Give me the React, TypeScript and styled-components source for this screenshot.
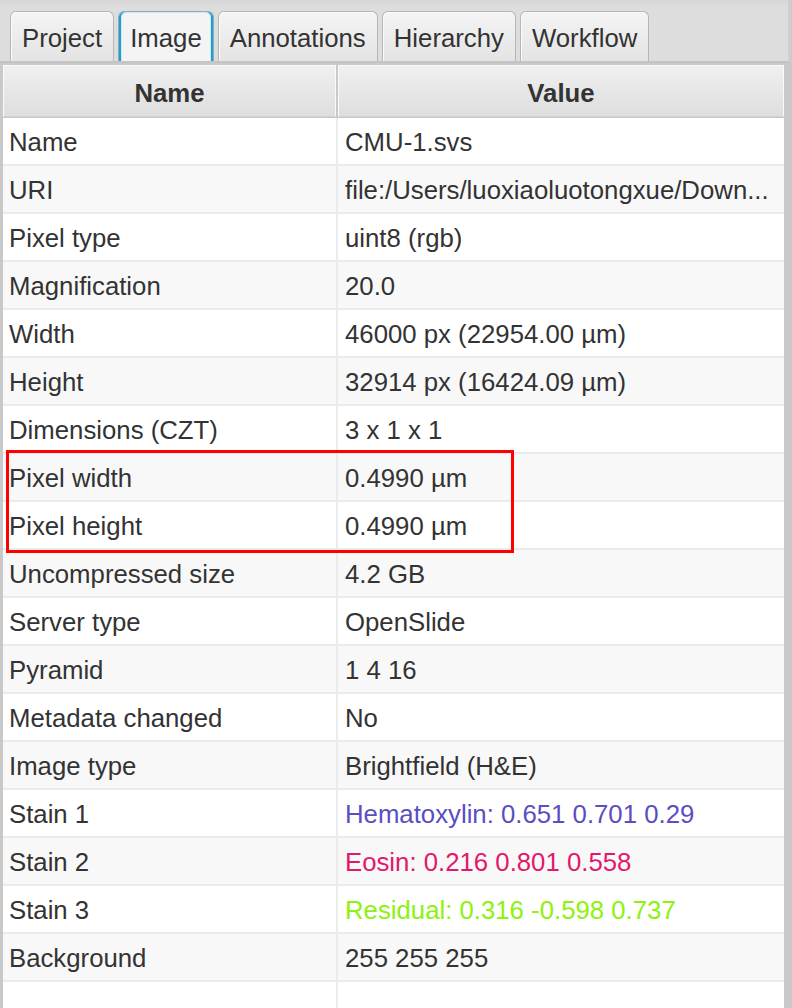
import React from "react";
import styled, { createGlobalStyle } from "styled-components";

const Global = createGlobalStyle`
  html, body { margin: 0; padding: 0; background: #c9c9c9; }
  body { font-family: "Liberation Sans", Arial, sans-serif; }
  * { box-sizing: border-box; }
`;

const Page = styled.div`
  width: 792px;
  height: 1008px;
  overflow: hidden;
  background: #c9c9c9;
  display: flex;
  flex-direction: column;
`;

const TabBar = styled.div`
  height: 63px;
  flex: none;
  display: flex;
  align-items: flex-end;
  gap: 4px;
  padding-left: 10px;
  background: linear-gradient(#d6d6d6 0px, #dddddd 6px, #dddddd 100%);
  border-bottom: 2px solid #c4c4c4;
  border-right: 3px solid #cfcfcf;
  margin-right: 1px;
`;

const Tab = styled.div<{ $active?: boolean }>`
  height: 50px;
  padding: 4px 11px 0;
  display: flex;
  align-items: center;
  font-size: 25.75px;
  color: #333;
  border-radius: 6px 6px 0 0;
  border: 1px solid ${(p) => (p.$active ? "#9aa9b0" : "#b6b6b6")};
  border-bottom: none;
  background: ${(p) =>
    p.$active ? "#f4f4f4" : "linear-gradient(#f4f4f4, #e4e4e4)"};
  box-shadow: ${(p) =>
    p.$active
      ? "inset 2px 0 0 #1d9fd6, inset -2px 0 0 #1d9fd6, inset 3px 1px 0 #c8ecf6, inset -3px 1px 0 #c8ecf6"
      : "inset 1px 1px 0 #fafafa"};
`;

const Content = styled.div`
  flex: 1;
  padding: 2px 8px 0 3px;
  display: flex;
  flex-direction: column;
`;

const Header = styled.div`
  display: grid;
  grid-template-columns: 333px 1fr;
  gap: 2px;
  height: 53px;
  flex: none;
  padding-bottom: 1px;
  background: #c9c9c9;
`;

const HeaderCell = styled.div`
  display: flex;
  align-items: center;
  justify-content: center;
  padding-top: 5px;
  font-size: 25.75px;
  font-weight: bold;
  color: #333;
  background: linear-gradient(#f0f0f0, #dedede);
  border: 1px solid #fafafa;
  border-bottom-color: #d2d2d2;
`;

const Body = styled.div`
  position: relative;
  flex: 1;
  background: #fff;
  overflow: hidden;
`;

const Row = styled.div<{ $odd: boolean }>`
  display: grid;
  grid-template-columns: 333px 2px 1fr;
  height: 48px;
  background: ${(p) => (p.$odd ? "#f8f8f8" : "#ffffff")};
  border-bottom: 2px solid #ebebeb;
`;

const Divider = styled.div`
  background: #ebebeb;
`;

const Cell = styled.div<{ $color?: string; $pad: number }>`
  display: flex;
  align-items: center;
  padding-left: ${(p) => p.$pad}px;
  padding-top: 2px;
  font-size: 25.75px;
  color: ${(p) => p.$color ?? "#333"};
  white-space: nowrap;
  overflow: hidden;
`;

const Highlight = styled.div`
  position: absolute;
  left: 3px;
  top: 332px;
  width: 508px;
  height: 103px;
  border: 3px solid #ff0000;
  pointer-events: none;
`;

type Item = { name: string; value: string; color?: string };

const rows: Item[] = [
  { name: "Name", value: "CMU-1.svs" },
  { name: "URI", value: "file:/Users/luoxiaoluotongxue/Down..." },
  { name: "Pixel type", value: "uint8 (rgb)" },
  { name: "Magnification", value: "20.0" },
  { name: "Width", value: "46000 px (22954.00 µm)" },
  { name: "Height", value: "32914 px (16424.09 µm)" },
  { name: "Dimensions (CZT)", value: "3 x 1 x 1" },
  { name: "Pixel width", value: "0.4990 µm" },
  { name: "Pixel height", value: "0.4990 µm" },
  { name: "Uncompressed size", value: "4.2 GB" },
  { name: "Server type", value: "OpenSlide" },
  { name: "Pyramid", value: "1 4 16" },
  { name: "Metadata changed", value: "No" },
  { name: "Image type", value: "Brightfield (H&E)" },
  { name: "Stain 1", value: "Hematoxylin: 0.651 0.701 0.29", color: "#5a4ec2" },
  { name: "Stain 2", value: "Eosin: 0.216 0.801 0.558", color: "#e2186b" },
  { name: "Stain 3", value: "Residual: 0.316 -0.598 0.737", color: "#8cf20e" },
  { name: "Background", value: "255 255 255" },
  { name: "", value: "" },
];

const tabs = ["Project", "Image", "Annotations", "Hierarchy", "Workflow"];

export default function App() {
  return (
    <>
      <Global />
      <Page>
        <TabBar>
          {tabs.map((t) => (
            <Tab key={t} $active={t === "Image"}>
              {t}
            </Tab>
          ))}
        </TabBar>
        <Content>
          <Header>
            <HeaderCell>Name</HeaderCell>
            <HeaderCell>Value</HeaderCell>
          </Header>
          <Body>
            {rows.map((r, i) => (
              <Row key={i} $odd={i % 2 === 1}>
                <Cell $pad={6}>{r.name}</Cell>
                <Divider />
                <Cell $pad={7} $color={r.color}>
                  {r.value}
                </Cell>
              </Row>
            ))}
            <Highlight />
          </Body>
        </Content>
      </Page>
    </>
  );
}
